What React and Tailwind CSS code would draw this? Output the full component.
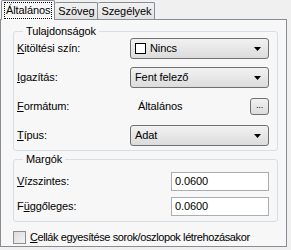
import React from "react";

function Combo({ children }) {
  return (
    <div className="flex h-[21px] w-[139px] items-center rounded-[3px] border border-[#707070] bg-gradient-to-b from-[#f2f2f2] to-[#dcdcdc] pl-[4px] pr-[7px]">
      <div className="flex flex-1 items-center gap-[4px]">{children}</div>
      <svg width="7" height="4" viewBox="0 0 7 4">
        <path d="M0 0h7L3.5 4z" fill="#000" />
      </svg>
    </div>
  );
}

function Row({ label, children }) {
  return (
    <div className="flex h-[21px] items-center">
      <div className="w-[113px]">{label}</div>
      {children}
    </div>
  );
}

function TextBox({ value }) {
  return (
    <div className="flex h-[19px] w-[98px] items-center border border-[#abadb3] bg-white pl-[3px]">
      {value}
    </div>
  );
}

export default function App() {
  return (
    <div className="h-[250px] w-[291px] bg-[#f0f0f0] font-['Liberation_Sans',Arial,sans-serif] text-[11px] leading-[13px] tracking-[-0.1px] text-black">
      <div className="flex h-[19px] items-end pl-[1px]">
        <div className="relative z-10 -mb-[1px] flex h-[20px] items-center rounded-t-[2px] border border-b-0 border-[#898c95] bg-[#f7f7f7] px-[2px]">
          <span className="border border-dotted border-black px-[1px] py-[1px]">Általános</span>
        </div>
        <div className="flex h-[17px] items-center rounded-t-[2px] border border-b-0 border-l-0 border-[#898c95] bg-gradient-to-b from-[#f2f2f2] to-[#e2e2e2] px-[3px]">
          Szöveg
        </div>
        <div className="flex h-[17px] items-center rounded-t-[2px] border border-b-0 border-l-0 border-[#898c95] bg-gradient-to-b from-[#f2f2f2] to-[#e2e2e2] px-[3px]">
          Szegélyek
        </div>
      </div>
      <div className="h-[228px] w-[287px] border border-[#898c95] bg-[#f7f7f7] pl-[12px] pt-[5px]">
        <fieldset className="w-[265px] rounded-[3px] border border-[#d5dfe5] pb-[4px] pl-[3px]">
          <legend className="ml-[6px] px-[3px]">Tulajdonságok</legend>
          <div className="flex flex-col gap-[8px]">
            <Row label={<><u>K</u>itöltési szín:</>}>
              <Combo>
                <span className="h-[11px] w-[11px] border border-black bg-white" />
                <span>Nincs</span>
              </Combo>
            </Row>
            <Row label={<><u>I</u>gazítás:</>}>
              <Combo>Fent felező</Combo>
            </Row>
            <Row label={<><u>F</u>ormátum:</>}>
              <div className="flex w-[139px] items-center justify-between pl-[8px]">
                <span>Általános</span>
                <div className="flex h-[17px] w-[19px] items-center justify-center rounded-[3px] border border-[#707070] bg-gradient-to-b from-[#f2f2f2] to-[#dcdcdc] pb-[3px] text-[9px]">
                  ...
                </div>
              </div>
            </Row>
            <Row label={<><u>T</u>ípus:</>}>
              <Combo>Adat</Combo>
            </Row>
          </div>
        </fieldset>
        <fieldset className="mt-[2px] w-[265px] rounded-[3px] border border-[#d5dfe5] pb-[5px] pl-[3px]">
          <legend className="ml-[6px] px-[3px]">Margók</legend>
          <div className="mt-[6px] flex flex-col gap-[6px]">
            <div className="flex h-[19px] items-center">
              <div className="w-[154px]"><u>V</u>ízszintes:</div>
              <TextBox value="0.0600" />
            </div>
            <div className="flex h-[19px] items-center">
              <div className="w-[154px]">F<u>ü</u>ggőleges:</div>
              <TextBox value="0.0600" />
            </div>
          </div>
        </fieldset>
        <div className="mt-[9px] flex items-center gap-[4px]">
          <span className="h-[13px] w-[13px] border border-[#8e8f8f] bg-gradient-to-br from-[#dcdcdc] to-[#f4f4f4]" />
          <span className="tracking-[-0.4px]"><u>C</u>ellák egyesítése sorok/oszlopok létrehozásakor</span>
        </div>
      </div>
    </div>
  );
}
